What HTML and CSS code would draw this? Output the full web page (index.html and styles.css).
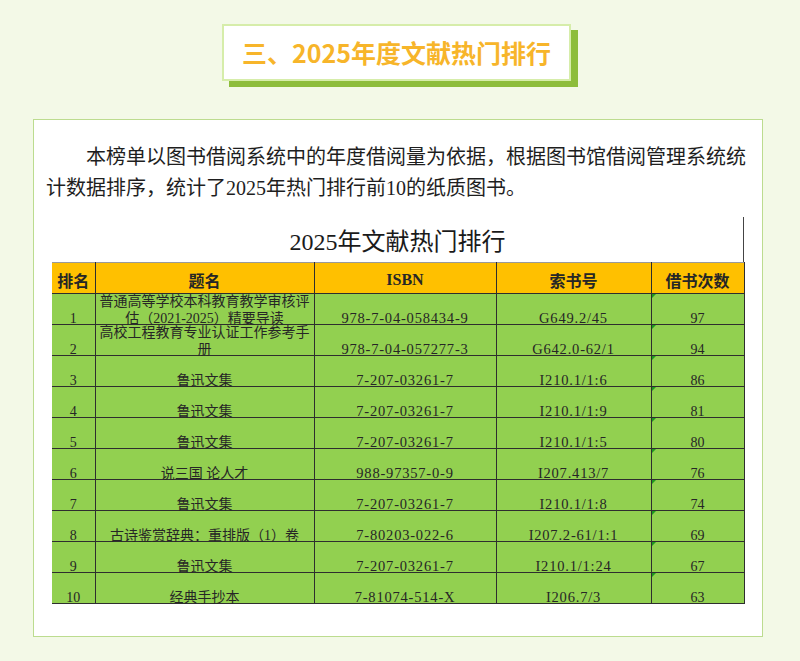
FILE: index.html
```html
<!DOCTYPE html>
<html lang="zh">
<head>
<meta charset="utf-8">
<title>2025年度文献热门排行</title>
<link rel="stylesheet" href="styles.css">
</head>
<body>
<div class="head-wrap">
  <h1 class="head">三、2025年度文献热门排行</h1>
</div>
<section class="panel">
  <p class="intro">本榜单以图书借阅系统中的年度借阅量为依据，根据图书馆借阅管理系统统计数据排序，统计了2025年热门排行前10的纸质图书。</p>
  <div class="sheet">
    <div class="sheet-title">2025年文献热门排行</div>
    <table class="rank">
      <colgroup>
        <col class="w1"><col class="w2"><col class="w3"><col class="w4"><col class="w5">
      </colgroup>
      <thead>
        <tr>
          <th><div class="h">排名</div></th>
          <th><div class="h">题名</div></th>
          <th><div class="h">ISBN</div></th>
          <th><div class="h">索书号</div></th>
          <th><div class="h">借书次数</div></th>
        </tr>
      </thead>
      <tbody>
        <tr><td><div class="c"><span>1</span></div></td><td><div class="c"><span>普通高等学校本科教育教学审核评估（2021-2025）精要导读</span></div></td><td class="code"><div class="c"><span>978-7-04-058434-9</span></div></td><td class="code"><div class="c"><span>G649.2/45</span></div></td><td class="n"><div class="c"><span>97</span></div></td></tr>
        <tr><td><div class="c"><span>2</span></div></td><td><div class="c"><span>高校工程教育专业认证工作参考手册</span></div></td><td class="code"><div class="c"><span>978-7-04-057277-3</span></div></td><td class="code"><div class="c"><span>G642.0-62/1</span></div></td><td class="n"><div class="c"><span>94</span></div></td></tr>
        <tr><td><div class="c"><span>3</span></div></td><td><div class="c"><span>鲁迅文集</span></div></td><td class="code"><div class="c"><span>7-207-03261-7</span></div></td><td class="code"><div class="c"><span>I210.1/1:6</span></div></td><td class="n"><div class="c"><span>86</span></div></td></tr>
        <tr><td><div class="c"><span>4</span></div></td><td><div class="c"><span>鲁迅文集</span></div></td><td class="code"><div class="c"><span>7-207-03261-7</span></div></td><td class="code"><div class="c"><span>I210.1/1:9</span></div></td><td class="n"><div class="c"><span>81</span></div></td></tr>
        <tr><td><div class="c"><span>5</span></div></td><td><div class="c"><span>鲁迅文集</span></div></td><td class="code"><div class="c"><span>7-207-03261-7</span></div></td><td class="code"><div class="c"><span>I210.1/1:5</span></div></td><td class="n"><div class="c"><span>80</span></div></td></tr>
        <tr><td><div class="c"><span>6</span></div></td><td><div class="c"><span>说三国 论人才</span></div></td><td class="code"><div class="c"><span>988-97357-0-9</span></div></td><td class="code"><div class="c"><span>I207.413/7</span></div></td><td class="n"><div class="c"><span>76</span></div></td></tr>
        <tr><td><div class="c"><span>7</span></div></td><td><div class="c"><span>鲁迅文集</span></div></td><td class="code"><div class="c"><span>7-207-03261-7</span></div></td><td class="code"><div class="c"><span>I210.1/1:8</span></div></td><td class="n"><div class="c"><span>74</span></div></td></tr>
        <tr><td><div class="c"><span>8</span></div></td><td><div class="c"><span>古诗鉴赏辞典：重排版（1）卷</span></div></td><td class="code"><div class="c"><span>7-80203-022-6</span></div></td><td class="code"><div class="c"><span>I207.2-61/1:1</span></div></td><td class="n"><div class="c"><span>69</span></div></td></tr>
        <tr><td><div class="c"><span>9</span></div></td><td><div class="c"><span>鲁迅文集</span></div></td><td class="code"><div class="c"><span>7-207-03261-7</span></div></td><td class="code"><div class="c"><span>I210.1/1:24</span></div></td><td class="n"><div class="c"><span>67</span></div></td></tr>
        <tr><td><div class="c"><span>10</span></div></td><td><div class="c"><span>经典手抄本</span></div></td><td class="code"><div class="c"><span>7-81074-514-X</span></div></td><td class="code"><div class="c"><span>I206.7/3</span></div></td><td class="n"><div class="c"><span>63</span></div></td></tr>
      </tbody>
    </table>
  </div>
</section>
</body>
</html>
```
FILE: styles.css
```css
* { box-sizing: border-box; }
html, body { margin: 0; padding: 0; }
body {
  background: #f3f9e7;
  width: 800px;
  height: 661px;
  overflow: hidden;
  font-family: "Liberation Serif", "Noto Sans CJK SC", serif;
}
.head-wrap {
  display: flex;
  justify-content: center;
  padding-top: 24px;
  padding-right: 7px;
}
.head {
  margin: 0;
  width: 349px;
  height: 57px;
  background: #fff;
  border: 2px solid #d6edaa;
  box-shadow: 7px 6px 0 #8dbd3c;
  color: #f7b52a;
  font-family: "Noto Sans CJK SC", sans-serif;
  font-weight: 700;
  font-size: 25px;
  line-height: 53px;
  text-align: center;
}
.panel {
  margin: 38px 0 0 33px;
  width: 730px;
  height: 518px;
  background: #fff;
  border: 1px solid #bcdc8f;
  padding: 22px 0 0 12px;
}
.intro {
  margin: 0;
  width: 704px;
  font-family: "Liberation Serif", "Noto Sans CJK SC", serif;
  font-size: 20px;
  line-height: 31px;
  text-indent: 2em;
  color: #1e1e1e;
}
.sheet {
  margin: 13px 0 0 6px;
  width: 692px;
}
.sheet-title {
  height: 45px;
  border-right: 1px solid #444;
  text-align: center;
  font-size: 24px;
  line-height: 50px;
  color: #1a1a1a;
}
.rank {
  border-collapse: collapse;
  table-layout: fixed;
  width: 692px;
  color: #262626;
}
.w1 { width: 43px; }
.w2 { width: 219px; }
.w3 { width: 182px; }
.w4 { width: 155px; }
.w5 { width: 93px; }
.rank th {
  background: #ffc000;
  padding: 0;
  border: 1px solid #2e2e2e;
  border-top: 1px solid #9a9a9a;
}
.rank th:first-child, .rank td:first-child { border-left: none; }
.rank td {
  background: #92d050;
  padding: 0;
  border: 1px solid #2e2e2e;
  position: relative;
}
.h {
  height: 30px;
  display: flex;
  align-items: center;
  justify-content: center;
  padding-top: 3px;
  font-size: 16px;
  font-weight: 700;
}
.c {
  height: 30px;
  display: flex;
  align-items: flex-end;
  justify-content: center;
  text-align: center;
  padding: 0 3px;
  font-size: 14px;
  line-height: 17px;
}
.c span { margin-bottom: -3px; }
.code .c { letter-spacing: 0.8px; font-size: 14.5px; }
.rank td.n::before {
  content: "";
  position: absolute;
  left: 0;
  top: 0;
  border-top: 4px solid #1f9a1f;
  border-right: 4px solid transparent;
}
```
